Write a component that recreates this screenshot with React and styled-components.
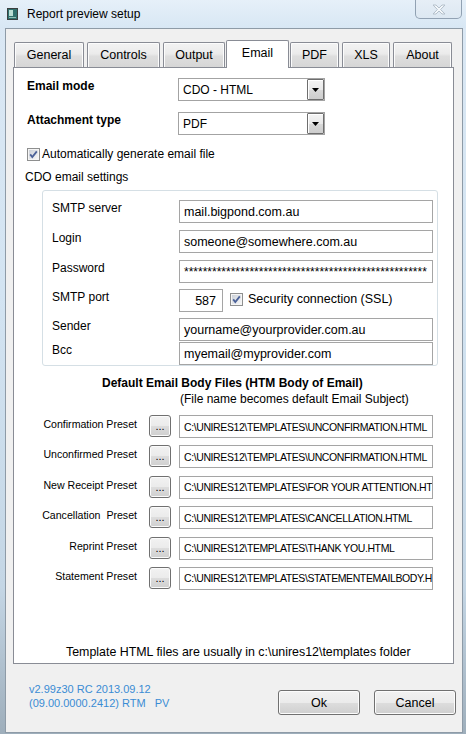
import React from "react";
import styled, { createGlobalStyle } from "styled-components";

const FONT = `"Liberation Sans", Arial, sans-serif`;

const Global = createGlobalStyle`
  html, body { margin: 0; padding: 0; }
  body { font-family: ${FONT}; color: #000; }
  * { box-sizing: border-box; }
`;

const Window = styled.div`
  width: 466px;
  height: 734px;
  display: flex;
  flex-direction: column;
  overflow: hidden;
  background: linear-gradient(180deg, #dbe8f4 0%, #d3e4f2 40%, #c4d6e5 80%, #9eaebb 100%);
`;

const TitleBar = styled.div`
  height: 28px;
  flex-shrink: 0;
  display: flex;
  align-items: flex-start;
  background: linear-gradient(180deg, #e6f0f9 0%, #d8e7f4 100%);
`;

const AppIcon = styled.svg`
  margin: 8px 0 0 7px;
  flex-shrink: 0;
`;

const Title = styled.div`
  margin: 7px 0 0 9px;
  font-size: 12px;
  line-height: 14px;
`;

const CloseBtn = styled.div`
  margin-left: auto;
  margin-right: 4px;
  width: 47px;
  height: 19px;
  border: 1px solid rgba(118, 136, 156, 0.75);
  border-top: none;
  border-radius: 0 0 5px 5px;
  background: linear-gradient(180deg, #e6eef6 0%, #dde8f2 100%);
  display: flex;
  align-items: center;
  justify-content: center;
`;

const Client = styled.div`
  flex: 1;
  margin: 0 3px 1px 5px;
  background: #f0f0f0;
  border: 1px solid #8e9ba7;
  padding: 11px 8px 0 7px;
  display: flex;
  flex-direction: column;
`;

const TabStrip = styled.div`
  height: 28px;
  display: flex;
  align-items: flex-end;
  margin-bottom: -1px;
  position: relative;
  z-index: 1;
`;

const Tab = styled.div`
  width: ${(p) => p.$w}px;
  margin-left: ${(p) => p.$ml}px;
  height: ${(p) => (p.$active ? 28 : 25)}px;
  margin-bottom: ${(p) => (p.$active ? 0 : 1)}px;
  border: 1px solid #898c95;
  border-bottom: none;
  border-radius: 2px 2px 0 0;
  background: ${(p) =>
    p.$active
      ? "#ffffff"
      : "linear-gradient(180deg, #f3f3f3 0%, #ebebeb 45%, #dedede 55%, #d6d6d6 100%)"};
  box-shadow: ${(p) => (p.$active ? "none" : "inset 1px 1px 0 #fcfcfc, inset -1px 0 0 #fcfcfc")};
  display: flex;
  justify-content: center;
  padding-top: 5px;
  font-size: 12.5px;
  line-height: 15px;
`;

const Panel = styled.div`
  height: 597px;
  flex-shrink: 0;
  background: #ffffff;
  border: 1px solid #898c95;
  display: flex;
  flex-direction: column;
`;

const TopGrid = styled.div`
  margin-top: 10px;
  padding-left: 13px;
  display: grid;
  grid-template-columns: 151px 147px;
  row-gap: 11px;
`;

const BoldLabel = styled.div`
  font-weight: bold;
  font-size: 12px;
  line-height: 14px;
  padding-top: 1px;
`;

const Select = styled.div`
  height: 23px;
  border: 1px solid #a3a3a3;
  display: flex;
  align-items: center;
  padding-left: 4px;
  font-size: 12px;
`;

const SelectText = styled.span`
  flex: 1;
  padding-top: 1px;
`;

const DropBtn = styled.div`
  width: 17px;
  height: 21px;
  border: 1px solid #6e6e6e;
  border-radius: 1px;
  background: linear-gradient(180deg, #f4f4f4 0%, #e9e9e9 50%, #d9d9d9 51%, #cdcdcd 100%);
  box-shadow: inset 1px 1px 0 #fff;
  display: flex;
  align-items: center;
  justify-content: center;
`;

const CheckRow = styled.div`
  display: flex;
  align-items: center;
  gap: 2px;
  margin-top: ${(p) => p.$mt}px;
  margin-left: ${(p) => p.$ml}px;
  font-size: 12px;
  line-height: 14px;
`;

const SectionText = styled.div`
  margin-top: ${(p) => p.$mt}px;
  padding-left: ${(p) => p.$pl}px;
  font-size: 12px;
  font-weight: ${(p) => (p.$bold ? "bold" : "normal")};
  line-height: 14px;
`;

const GroupBox = styled.div`
  margin: 6px 0 0 28px;
  width: 396px;
  border: 1px solid #d5dfe5;
  border-radius: 3px;
  padding: 9px 4px 0 9px;
`;

const FieldRow = styled.div`
  display: flex;
  align-items: flex-start;
  margin-top: ${(p) => p.$gap}px;
`;

const FieldLabel = styled.div`
  width: 127px;
  flex-shrink: 0;
  font-size: 12px;
  line-height: 14px;
  padding-top: 1px;
`;

const TextBox = styled.div`
  width: ${(p) => p.$w || 254}px;
  height: 23px;
  flex-shrink: 0;
  border: 1px solid #a5a5a5;
  background: #fff;
  padding: 0 ${(p) => (p.$right ? 6 : 4)}px 0 4px;
  display: flex;
  align-items: center;
  justify-content: ${(p) => (p.$right ? "flex-end" : "flex-start")};
  font-size: ${(p) => p.$size || 12.5}px;
  letter-spacing: ${(p) => p.$ls || 0}px;
  white-space: nowrap;
  overflow: hidden;
`;

const SslCheck = styled(CheckRow)`
  margin: 3px 0 0 7px;
  gap: 5px;
  font-size: 12.5px;
`;

const PresetList = styled.div`
  margin-top: 9px;
  display: flex;
  flex-direction: column;
  gap: 7.4px;
`;

const PresetRow = styled.div`
  display: flex;
  align-items: flex-start;
`;

const PresetLabel = styled.div`
  width: 123px;
  flex-shrink: 0;
  text-align: right;
  font-size: 10.6px;
  line-height: 13px;
  padding-top: 3px;
  white-space: pre;
`;

const BrowseBtn = styled.div`
  margin-left: 12px;
  width: 22px;
  height: 22px;
  flex-shrink: 0;
  border: 1px solid #707070;
  border-radius: 3px;
  background: linear-gradient(180deg, #f2f2f2 0%, #ebebeb 50%, #dddddd 51%, #cfcfcf 100%);
  box-shadow: inset 0 0 0 1px #fbfbfb;
  font-size: 11px;
  line-height: 11px;
  display: flex;
  justify-content: center;
  align-items: flex-end;
  padding-bottom: 4px;
`;

const PresetBox = styled(TextBox)`
  margin-left: 8px;
`;

const Note = styled.div`
  margin-top: auto;
  margin-bottom: 3px;
  padding-left: 52px;
  font-size: 12.4px;
  line-height: 15px;
`;

const Footer = styled.div`
  display: flex;
  align-items: flex-start;
  padding: 0 0 0 16px;
  margin-right: -2px;
`;

const Version = styled.div`
  margin-top: 18px;
  font-size: 11px;
  line-height: 14px;
  color: #3a8cd4;
  white-space: pre;
`;

const Buttons = styled.div`
  margin: 26px 0 0 auto;
  display: flex;
  gap: 14px;
`;

const PushButton = styled.div`
  width: 82px;
  height: 25px;
  border: 1px solid #707070;
  border-radius: 3px;
  background: linear-gradient(180deg, #f2f2f2 0%, #ebebeb 50%, #dddddd 51%, #cfcfcf 100%);
  box-shadow: inset 0 0 0 1px #fcfcfc;
  display: flex;
  align-items: center;
  justify-content: center;
  font-size: 12.5px;
`;

const CheckIcon = () => (
  <svg width="13" height="13" viewBox="0 0 13 13">
    <defs>
      <linearGradient id="cbg" x1="0" y1="0" x2="1" y2="1">
        <stop offset="0" stopColor="#cbd0d8" />
        <stop offset="1" stopColor="#f7f7f7" />
      </linearGradient>
    </defs>
    <rect x="0.5" y="0.5" width="12" height="12" fill="#f5f5f5" stroke="#8e8f8f" />
    <rect x="2" y="2" width="9" height="9" fill="url(#cbg)" />
    <path d="M3.2 6.4 L5.3 9 L9.8 3.4" fill="none" stroke="#4b6198" strokeWidth="1.8" />
  </svg>
);

const Arrow = () => (
  <svg width="7" height="4" viewBox="0 0 7 4">
    <path d="M0 0 H7 L3.5 4 Z" fill="#000" />
  </svg>
);

const tabs = [
  { t: "General", w: 70, ml: 1 },
  { t: "Controls", w: 73, ml: 3 },
  { t: "Output", w: 62, ml: 3 },
  { t: "Email", w: 63, ml: 1, active: true },
  { t: "PDF", w: 49, ml: 1 },
  { t: "XLS", w: 48, ml: 3 },
  { t: "About", w: 59, ml: 3 },
];

const fields = [
  { label: "SMTP server", value: "mail.bigpond.com.au", gap: 0 },
  { label: "Login", value: "someone@somewhere.com.au", gap: 7 },
  { label: "Password", value: "*".repeat(52), gap: 7, pw: true },
  { label: "SMTP port", port: true, gap: 6 },
  { label: "Sender", value: "yourname@yourprovider.com.au", gap: 6 },
  { label: "Bcc", value: "myemail@myprovider.com", gap: 1 },
];

const presets = [
  ["Confirmation Preset", "C:\\UNIRES12\\TEMPLATES\\UNCONFIRMATION.HTML"],
  ["Unconfirmed Preset", "C:\\UNIRES12\\TEMPLATES\\UNCONFIRMATION.HTML"],
  ["New Receipt Preset", "C:\\UNIRES12\\TEMPLATES\\FOR YOUR ATTENTION.HTML"],
  ["Cancellation  Preset", "C:\\UNIRES12\\TEMPLATES\\CANCELLATION.HTML"],
  ["Reprint Preset", "C:\\UNIRES12\\TEMPLATES\\THANK YOU.HTML"],
  ["Statement Preset", "C:\\UNIRES12\\TEMPLATES\\STATEMENTEMAILBODY.HTML"],
];

export default function App() {
  return (
    <>
      <Global />
      <Window>
        <TitleBar>
          <AppIcon width="11" height="12" viewBox="0 0 11 12">
            <rect x="0.5" y="0.5" width="10" height="11" fill="#2f6f6c" stroke="#3a3f3f" />
            <rect x="2" y="2" width="4" height="6" fill="#b9ddd4" />
            <rect x="2" y="9" width="7" height="1" fill="#8fbfb5" />
          </AppIcon>
          <Title>Report preview setup</Title>
          <CloseBtn>
            <svg width="14" height="11" viewBox="0 0 14 11">
              <path
                d="M1 1 L4 1 L7 4 L10 1 L13 1 L8.6 5.5 L13 10 L10 10 L7 7 L4 10 L1 10 L5.4 5.5 Z"
                fill="#f4f8fb"
                stroke="#b4c0cb"
                strokeWidth="1"
              />
            </svg>
          </CloseBtn>
        </TitleBar>
        <Client>
          <TabStrip>
            {tabs.map((tb) => (
              <Tab key={tb.t} $w={tb.w} $ml={tb.ml} $active={tb.active}>
                {tb.t}
              </Tab>
            ))}
          </TabStrip>
          <Panel>
            <TopGrid>
              <BoldLabel>Email mode</BoldLabel>
              <Select>
                <SelectText>CDO - HTML</SelectText>
                <DropBtn>
                  <Arrow />
                </DropBtn>
              </Select>
              <BoldLabel>Attachment type</BoldLabel>
              <Select>
                <SelectText>PDF</SelectText>
                <DropBtn>
                  <Arrow />
                </DropBtn>
              </Select>
            </TopGrid>
            <CheckRow $mt={12} $ml={13}>
              <CheckIcon />
              <span>Automatically generate email file</span>
            </CheckRow>
            <SectionText $mt={9} $pl={11}>CDO email settings</SectionText>
            <GroupBox>
              {fields.map((f) => (
                <FieldRow key={f.label} $gap={f.gap}>
                  <FieldLabel>{f.label}</FieldLabel>
                  {f.port ? (
                    <>
                      <TextBox $w={44} $right>
                        587
                      </TextBox>
                      <SslCheck>
                        <CheckIcon />
                        <span>Security connection (SSL)</span>
                      </SslCheck>
                    </>
                  ) : (
                    <TextBox $size={f.pw ? 12 : 12.5}>{f.value}</TextBox>
                  )}
                </FieldRow>
              ))}
            </GroupBox>
            <SectionText $mt={10} $pl={88} $bold>
              Default Email Body Files (HTM Body of Email)
            </SectionText>
            <SectionText $mt={2} $pl={166}>
              (File name becomes default Email Subject)
            </SectionText>
            <PresetList>
              {presets.map(([label, path]) => (
                <PresetRow key={label}>
                  <PresetLabel>{label}</PresetLabel>
                  <BrowseBtn>...</BrowseBtn>
                  <PresetBox $size={10.5} $ls={-0.4}>
                    {path}
                  </PresetBox>
                </PresetRow>
              ))}
            </PresetList>
            <Note>Template HTML files are usually in c:\unires12\templates folder</Note>
          </Panel>
          <Footer>
            <Version>{"v2.99z30 RC 2013.09.12\n(09.00.0000.2412) RTM   PV"}</Version>
            <Buttons>
              <PushButton>Ok</PushButton>
              <PushButton>Cancel</PushButton>
            </Buttons>
          </Footer>
        </Client>
      </Window>
    </>
  );
}
